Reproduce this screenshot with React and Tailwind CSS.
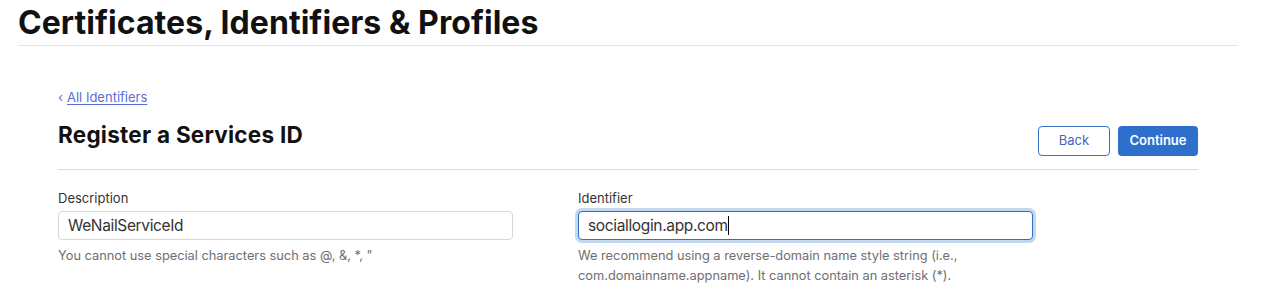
import React from 'react';

const font = { fontFamily: 'Inter, "Liberation Sans", sans-serif' };

function Field({ label, value, focused, help }) {
    return (
        <div>
            <label className="block text-[13px] leading-[16px] text-[#333]">{label}</label>
            <div
                className={`mt-[5px] w-[455px] h-[29px] flex items-center px-[9px] rounded-[4px] bg-white text-[15.5px] text-[#333] tracking-[-0.35px] ${focused
                        ? 'border border-[#2f6fc7] ring-[3px] ring-[#c3d7f1]'
                        : 'border border-[#d6d6d6]'
                    }`}
            >
                <span>{value}</span>
                {focused && <span className="inline-block w-px h-[19px] bg-black" />}
            </div>
            <p className="mt-[6px] text-[12.8px] leading-[20px] text-[#6e6e73]">{help}</p>
        </div>
    );
}

export default function App() {
    return (
        <div className="min-h-screen bg-white" style={font}>
            {/* Page header */}
            <div className="ml-[18px] w-[1220px] pt-[4px] pb-[3px] border-b border-[#e5e5e5]">
                <h1 className="text-[32px] leading-[38px] font-bold text-[#111] tracking-[0.05px]">
                    Certificates, Identifiers &amp; Profiles
                </h1>
            </div>

            <div className="ml-[58px] w-[1140px]">
                <div className="pt-[38px]">
                    <a href="#" className="text-[13px] leading-[16px] text-[#5b6fd3]">
                        <span className="mr-[4px]">‹</span>
                        <span className="underline underline-offset-2">All Identifiers</span>
                    </a>
                </div>

                {/* Title row */}
                <div className="flex items-start justify-between pb-[13px] border-b border-[#dcdcdc]">
                    <h2 className="mt-[13px] text-[22.5px] leading-[28px] font-bold text-[#111] tracking-[0.25px]">
                        Register a Services ID
                    </h2>
                    <div className="mt-[18px] flex gap-[8px]">
                        <button className="w-[72px] h-[30px] rounded-[4px] border border-[#3a72c9] bg-white text-[13px] text-[#4466c0]">
                            Back
                        </button>
                        <button className="w-[80px] h-[30px] rounded-[4px] bg-[#2e6fcb] text-[13px] font-semibold text-white">
                            Continue
                        </button>
                    </div>
                </div>

                {/* Fields */}
                <div className="grid grid-cols-[455px_455px] gap-x-[65px] pt-[20px]">
                    <Field
                        label="Description"
                        value="WeNailServiceId"
                        help={'You cannot use special characters such as @, &, *, "'}
                    />
                    <Field
                        label="Identifier"
                        value="sociallogin.app.com"
                        focused
                        help={
                            <>
                                We recommend using a reverse-domain name style string (i.e.,
                                <br />
                                com.domainname.appname). It cannot contain an asterisk (*).
                            </>
                        }
                    />
                </div>
            </div>
        </div>
    );
}
